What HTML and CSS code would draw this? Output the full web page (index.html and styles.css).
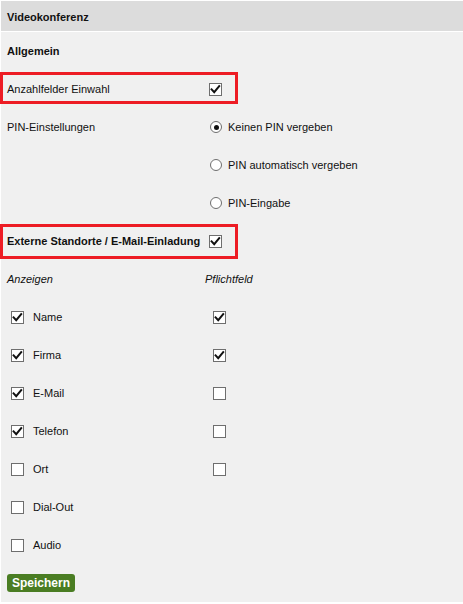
FILE: index.html
```html
<!DOCTYPE html>
<html lang="de">
<head>
<meta charset="utf-8">
<title>Videokonferenz</title>
<link rel="stylesheet" href="styles.css">
</head>
<body>
<div class="panel">
  <div class="panel-head">Videokonferenz</div>
  <div class="panel-body">
    <div class="row"><span class="title">Allgemein</span></div>

    <div class="row marked marked-a">
      <span class="col1">Anzahlfelder Einwahl</span>
      <span class="col2"><span class="cb on"><svg viewBox="0 0 13 13"><path d="M2.6 6.4 L5.2 9.2 L10.2 3.2"/></svg></span></span>
    </div>

    <div class="row">
      <span class="col1">PIN-Einstellungen</span>
      <span class="col2 radio-line"><span class="rb on"></span><span class="rl">Keinen PIN vergeben</span></span>
    </div>
    <div class="row">
      <span class="col1"></span>
      <span class="col2 radio-line"><span class="rb"></span><span class="rl">PIN automatisch vergeben</span></span>
    </div>
    <div class="row">
      <span class="col1"></span>
      <span class="col2 radio-line"><span class="rb"></span><span class="rl">PIN-Eingabe</span></span>
    </div>

    <div class="row marked marked-b">
      <span class="col1 bold">Externe Standorte / E-Mail-Einladung</span>
      <span class="col2"><span class="cb on"><svg viewBox="0 0 13 13"><path d="M2.6 6.4 L5.2 9.2 L10.2 3.2"/></svg></span></span>
    </div>

    <div class="row">
      <span class="col1 it">Anzeigen</span>
      <span class="col2 it shift">Pflichtfeld</span>
    </div>

    <div class="row">
      <span class="col1 item"><span class="cb on"><svg viewBox="0 0 13 13"><path d="M2.6 6.4 L5.2 9.2 L10.2 3.2"/></svg></span><span class="il">Name</span></span>
      <span class="col2"><span class="cb on"><svg viewBox="0 0 13 13"><path d="M2.6 6.4 L5.2 9.2 L10.2 3.2"/></svg></span></span>
    </div>
    <div class="row">
      <span class="col1 item"><span class="cb on"><svg viewBox="0 0 13 13"><path d="M2.6 6.4 L5.2 9.2 L10.2 3.2"/></svg></span><span class="il">Firma</span></span>
      <span class="col2"><span class="cb on"><svg viewBox="0 0 13 13"><path d="M2.6 6.4 L5.2 9.2 L10.2 3.2"/></svg></span></span>
    </div>
    <div class="row">
      <span class="col1 item"><span class="cb on"><svg viewBox="0 0 13 13"><path d="M2.6 6.4 L5.2 9.2 L10.2 3.2"/></svg></span><span class="il">E-Mail</span></span>
      <span class="col2"><span class="cb"></span></span>
    </div>
    <div class="row">
      <span class="col1 item"><span class="cb on"><svg viewBox="0 0 13 13"><path d="M2.6 6.4 L5.2 9.2 L10.2 3.2"/></svg></span><span class="il">Telefon</span></span>
      <span class="col2"><span class="cb"></span></span>
    </div>
    <div class="row">
      <span class="col1 item"><span class="cb"></span><span class="il">Ort</span></span>
      <span class="col2"><span class="cb"></span></span>
    </div>
    <div class="row">
      <span class="col1 item"><span class="cb"></span><span class="il">Dial-Out</span></span>
    </div>
    <div class="row">
      <span class="col1 item"><span class="cb"></span><span class="il">Audio</span></span>
    </div>

    <div class="row"><button class="save" type="button">Speichern</button></div>
  </div>
</div>
</body>
</html>
```

FILE: styles.css
```css
html, body {
  margin: 0;
  padding: 0;
  background: #ffffff;
}
body {
  font-family: "Liberation Sans", Arial, sans-serif;
  font-size: 11px;
  color: #111;
}
.panel {
  margin: 1px 0 1px 1px;
  background: #f0f0f0;
  height: 601px;
  position: relative;
}
.panel-head {
  height: 30px;
  background: #dcdcdc;
  border-bottom: 1px solid #ffffff;
  font-weight: bold;
  display: flex;
  align-items: center;
  padding-left: 6px;
  padding-top: 1px;
  box-sizing: border-box;
  height: 31px;
}
.panel-body {
  display: flex;
  flex-direction: column;
}
.row {
  height: 38px;
  display: flex;
  align-items: center;
  padding-left: 6px;
  position: relative;
}
.title, .bold { font-weight: bold; }
.col1 {
  width: 202px;
  flex: none;
  display: flex;
  align-items: center;
}
.col2 {
  display: flex;
  align-items: center;
}
.it { font-style: italic; }
.shift { margin-left: -4px; }
.item { padding-left: 4px; }
.il { margin-left: 9px; }

.marked::after {
  content: "";
  position: absolute;
  left: -1px;
  width: 238px;
  border: 3px solid #ed1c24;
  box-sizing: border-box;
  pointer-events: none;
}
.marked-a::after { top: 2px; height: 32px; }
.marked-b::after { top: 2px; height: 35px; }

.cb {
  width: 13px;
  height: 13px;
  box-sizing: border-box;
  border: 1px solid #6e6e6e;
  background: #ffffff;
  display: inline-block;
  flex: none;
  position: relative;
}
.cb svg {
  position: absolute;
  left: -1px;
  top: -1px;
  width: 13px;
  height: 13px;
}
.cb svg path {
  fill: none;
  stroke: #111;
  stroke-width: 2;
  stroke-linecap: square;
  stroke-linejoin: miter;
}

.radio-line { padding-left: 1px; }
.rb {
  width: 12px;
  height: 12px;
  box-sizing: border-box;
  border: 1px solid #6e6e6e;
  border-radius: 50%;
  background: #ffffff;
  display: inline-block;
  position: relative;
  flex: none;
}
.rb.on::after {
  content: "";
  position: absolute;
  left: 2.5px;
  top: 2.5px;
  width: 5px;
  height: 5px;
  border-radius: 50%;
  background: #111;
}
.rl { margin-left: 6px; }

.save {
  font-family: "Liberation Sans", Arial, sans-serif;
  font-size: 12px;
  font-weight: bold;
  color: #ffffff;
  background: #4a7d23;
  border: none;
  border-radius: 3px;
  height: 18px;
  width: 68px;
  padding: 0;
  margin-top: 0;
  line-height: 18px;
}
```
